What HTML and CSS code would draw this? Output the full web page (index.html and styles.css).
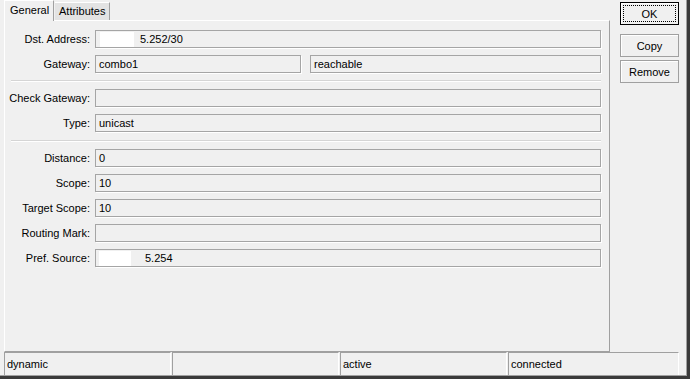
FILE: index.html
```html
<!DOCTYPE html>
<html lang="en">

<head>
    <meta charset="UTF-8">
    <title>Route</title>
    <link rel="stylesheet" href="styles.css">
</head>

<body>
    <div class="window">
        <div class="top">
            <div class="tabbox">
                <div class="tabs">
                    <div class="tab active">General</div>
                    <div class="tab">Attributes</div>
                </div>
                <div class="panel">
                    <div class="row">
                        <label>Dst. Address:</label>
                        <div class="field"><span class="mask"></span>5.252/30</div>
                    </div>
                    <div class="row">
                        <label>Gateway:</label>
                        <div class="pair">
                            <div class="field">combo1</div>
                            <div class="field">reachable</div>
                        </div>
                    </div>
                    <div class="sep"></div>
                    <div class="row">
                        <label>Check Gateway:</label>
                        <div class="field"></div>
                    </div>
                    <div class="row">
                        <label>Type:</label>
                        <div class="field">unicast</div>
                    </div>
                    <div class="sep lower"></div>
                    <div class="row">
                        <label>Distance:</label>
                        <div class="field">0</div>
                    </div>
                    <div class="row">
                        <label>Scope:</label>
                        <div class="field">10</div>
                    </div>
                    <div class="row">
                        <label>Target Scope:</label>
                        <div class="field">10</div>
                    </div>
                    <div class="row">
                        <label>Routing Mark:</label>
                        <div class="field"></div>
                    </div>
                    <div class="row">
                        <label>Pref. Source:</label>
                        <div class="field"><span class="mask short"></span>5.254</div>
                    </div>
                </div>
            </div>
            <div class="actions">
                <button class="default"><span>OK</span></button>
                <button class="spaced">Copy</button>
                <button>Remove</button>
            </div>
        </div>
        <div class="status">
            <div class="cell">dynamic</div>
            <div class="cell"></div>
            <div class="cell">active</div>
            <div class="cell">connected</div>
        </div>
    </div>
</body>

</html>
```

FILE: styles.css
```css
html,
body {
    padding: 0;
    margin: 0;
}

* {
    box-sizing: border-box;
}

body {
    background-color: #f0f0f0;
    color: #000;
    font-family: "Liberation Sans", Arial, sans-serif;
    font-size: 11px;
}

.window {
    width: 690px;
    height: 379px;
    border-right: 3px solid #3a3a3a;
    border-bottom: 3px solid #3a3a3a;
    box-shadow: inset -1px -1px 0 #a0a0a0;
    display: flex;
    flex-direction: column;
}

.top {
    display: flex;
    height: 352px;
}

.tabbox {
    margin-left: 4px;
    width: 606px;
    display: flex;
    flex-direction: column;
}

.tabs {
    display: flex;
    height: 20px;
    align-items: flex-end;
}

.tab {
    height: 18px;
    padding: 2px 4px 0 4px;
    background-color: #e3e3e3;
    border-top: 1px solid #fff;
    border-right: 1px solid #a0a0a0;
    margin-left: 1px;
}

.tab.active {
    height: 21px;
    margin-left: 0;
    margin-bottom: -1px;
    padding: 3px 5px 0 5px;
    background-color: #f0f0f0;
    border-left: 1px solid #fff;
    position: relative;
    width: 50px;
}

.panel {
    flex: 1;
    border-top: 1px solid #fff;
    border-left: 1px solid #fff;
    border-right: 1px solid #a0a0a0;
    border-bottom: 1px solid #a0a0a0;
    padding: 9px 8px 0 0;
    display: flex;
    flex-direction: column;
    gap: 7px;
}

.row {
    display: grid;
    grid-template-columns: 85px 1fr;
    gap: 5px;
    height: 18px;
    align-items: center;
}

.row label {
    text-align: right;
}

.field {
    height: 18px;
    border: 1px solid #a5a5a5;
    box-shadow: 1px 1px 0 #fff;
    padding: 2px 0 0 3px;
    white-space: nowrap;
    display: flex;
}

.mask {
    display: inline-block;
    width: 34px;
    height: 15px;
    margin: -1px 6px 0 1px;
    background-color: #fff;
}

.mask.short {
    width: 32px;
    margin: -1px 14px 0 0;
}

.pair {
    display: grid;
    grid-template-columns: 206px 1fr;
    gap: 9px;
}

.sep {
    height: 2px;
    margin-left: 6px;
    border-top: 1px solid #d5d5d5;
    border-bottom: 1px solid #fff;
}

.sep.lower {
    margin-top: 1px;
}

.actions {
    display: flex;
    flex-direction: column;
    padding: 2px 0 0 10px;
    gap: 3px;
}

button {
    width: 59px;
    height: 23px;
    border: 1px solid #a0a0a0;
    box-shadow: inset 1px 1px 0 #fff;
    background-color: #f0f0f0;
    font-family: inherit;
    font-size: 11px;
    color: #000;
    padding: 0;
}

button.default {
    border: 1px solid #000;
    padding: 2px;
}

button.default span {
    display: flex;
    align-items: center;
    justify-content: center;
    height: 100%;
    border: 1px dotted #000;
}

button.spaced {
    margin-top: 6px;
}

.status {
    display: flex;
    gap: 1px;
    padding-left: 4px;
    height: 24px;
}

.cell {
    width: 167px;
    height: 23px;
    border-top: 1px solid #a0a0a0;
    border-left: 1px solid #a0a0a0;
    border-right: 1px solid #fff;
    padding: 5px 0 0 2px;
}

.cell:last-child {
    width: 171px;
}
```
